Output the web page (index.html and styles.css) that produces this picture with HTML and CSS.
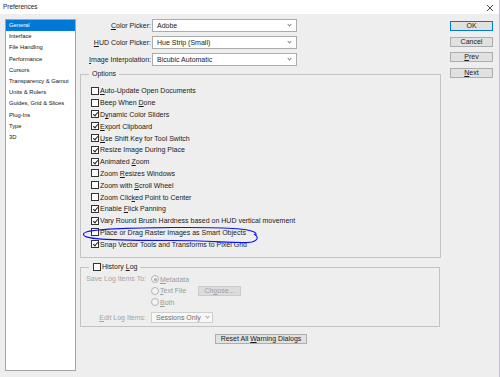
FILE: index.html
```html
<!DOCTYPE html>
<html lang="en">
<head>
    <meta charset="UTF-8">
    <meta name="viewport" content="width=device-width, initial-scale=1.0">
    <title>Preferences</title>
    <link rel="stylesheet" href="styles.css">
</head>
<body>
    <div class="window">
        <div class="titlebar">
            <span>Preferences</span>
            <svg class="close" width="8" height="8" viewBox="0 0 8 8"><path d="M1 1L7 7M7 1L1 7" stroke="#333" stroke-width="0.9"/></svg>
        </div>

        <div class="main">
            <ul class="nav">
                <li class="active">General</li>
                <li>Interface</li>
                <li>File Handling</li>
                <li>Performance</li>
                <li>Cursors</li>
                <li>Transparency &amp; Gamut</li>
                <li>Units &amp; Rulers</li>
                <li>Guides, Grid &amp; Slices</li>
                <li>Plug-Ins</li>
                <li>Type</li>
                <li>3D</li>
            </ul>

            <div class="panel">
                <div class="pickers">
                    <label><u>C</u>olor Picker:</label>
                    <div class="select"><span>Adobe</span><span class="chev"></span></div>
                    <label><u>H</u>UD Color Picker:</label>
                    <div class="select"><span>Hue Strip (Small)</span><span class="chev"></span></div>
                    <label><u>I</u>mage Interpolation:</label>
                    <div class="select"><span>Bicubic Automatic</span><span class="chev"></span></div>
                </div>

                <fieldset class="group options">
                    <legend>Options</legend>
                    <ul class="checks">
                        <li><span class="cb"></span><span><u>A</u>uto-Update Open Documents</span></li>
                        <li><span class="cb"></span><span>Beep When <u>D</u>one</span></li>
                        <li><span class="cb on"></span><span>D<u>y</u>namic Color Sliders</span></li>
                        <li><span class="cb on"></span><span><u>E</u>xport Clipboard</span></li>
                        <li><span class="cb on"></span><span><u>U</u>se Shift Key for Tool Switch</span></li>
                        <li><span class="cb on"></span><span>Resize Image During Place</span></li>
                        <li><span class="cb on"></span><span>Animated <u>Z</u>oom</span></li>
                        <li><span class="cb"></span><span>Zoom <u>R</u>esizes Windows</span></li>
                        <li><span class="cb"></span><span>Zoom with <u>S</u>croll Wheel</span></li>
                        <li><span class="cb"></span><span>Zoom Clic<u>k</u>ed Point to Center</span></li>
                        <li><span class="cb on"></span><span>Enable <u>F</u>lick Panning</span></li>
                        <li><span class="cb on"></span><span>Vary Round Brush Hardness based on HUD vertical movement</span></li>
                        <li><span class="cb"></span><span>Place or Drag Raster Images as Smart Objects</span></li>
                        <li><span class="cb on"></span><span>Snap Vector Tools and Transforms to Pixel Grid</span></li>
                    </ul>
                </fieldset>

                <fieldset class="group history">
                    <legend><span class="cb"></span><span>History <u>L</u>og</span></legend>
                    <div class="log-grid">
                        <label>Save Log Items To:</label>
                        <div class="radio-row"><span class="rd on"></span><span><u>M</u>etadata</span></div>
                        <span></span>
                        <div class="radio-row"><span class="rd"></span><span class="rd-text"><u>T</u>ext File</span><button class="btn disabled">Ch<u>o</u>ose...</button></div>
                        <span></span>
                        <div class="radio-row"><span class="rd"></span><span><u>B</u>oth</span></div>
                        <label class="edit-label"><u>E</u>dit Log Items:</label>
                        <div class="select small"><span>Sessions Only</span><span class="chev"></span></div>
                    </div>
                </fieldset>

                <div class="reset-row">
                    <button class="btn">Reset All <u>W</u>arning Dialogs</button>
                </div>
            </div>

            <div class="actions">
                <button class="btn default">OK</button>
                <button class="btn">Cancel</button>
                <button class="btn"><u>P</u>rev</button>
                <button class="btn"><u>N</u>ext</button>
            </div>
        </div>

        <svg class="annot" width="180" height="22" viewBox="0 0 180 22">
            <path d="M174 11 C176 5 150 3 90 3.5 C40 4 2 5 1.5 10 C1 15 20 16.5 90 16.5 C130 16.5 160 20 170 18 C176 16 177 13 172 10" fill="none" stroke="#1010ff" stroke-width="1.1"/>
        </svg>
    </div>
</body>
</html>
```

FILE: styles.css
```css
* {
    box-sizing: border-box;
}
html, body {
    margin: 0;
    padding: 0;
}
body {
    font-family: "Liberation Sans", Arial, sans-serif;
    font-size: 7px;
    color: #1a1a1a;
    background: #eeeeee;
}
.window {
    position: relative;
    width: 500px;
    height: 377px;
    overflow: hidden;
    background: #eeeeee;
    border-right: 1px solid #c6bdea;
}
.titlebar {
    height: 14px;
    background: #ffffff;
    display: flex;
    justify-content: space-between;
    align-items: center;
    padding: 0 5px 2px 3px;
    font-size: 6.4px;
}
.close {
    margin-top: 4px;
}
.main {
    display: flex;
    padding: 5px 0 0 5px;
}
.nav {
    list-style: none;
    margin: 0;
    padding: 0;
    width: 71px;
    height: 352px;
    background: #ffffff;
    border: 1px solid #a4a4a4;
    font-size: 5.8px;
    color: #111;
}
.nav li {
    height: 11.2px;
    line-height: 11.2px;
    padding-left: 3px;
    white-space: nowrap;
}
.nav li.active {
    background: #0078d7;
    color: #ffffff;
}
.panel {
    width: 361px;
    margin-left: 4px;
}
.pickers {
    display: grid;
    grid-template-columns: 71px 145px;
    column-gap: 1px;
    row-gap: 4px;
}
.pickers label {
    text-align: right;
    line-height: 13px;
    white-space: nowrap;
}
.select {
    height: 13px;
    background: #ffffff;
    border: 1px solid #acacac;
    display: flex;
    align-items: center;
    justify-content: space-between;
    padding: 0 5px 0 4px;
}
.chev {
    width: 3px;
    height: 3px;
    border: solid #888;
    border-width: 0 1px 1px 0;
    transform: rotate(45deg);
    margin-top: -2px;
}
.group {
    margin: 3px 0 0;
    border: 1px solid #c3c3c3;
    padding: 6px 8px 7px 8px;
    min-width: 0;
}
.group legend {
    padding: 0 3px;
    line-height: 10px;
}
.checks {
    list-style: none;
    margin: 0 0 0 2px;
    padding: 0;
}
.checks li {
    height: 11.8px;
    display: flex;
    align-items: center;
    gap: 1px;
    white-space: nowrap;
}
.cb {
    position: relative;
    display: inline-block;
    width: 8px;
    height: 8px;
    flex: none;
    border: 1px solid #333;
    background: #ffffff;
}
.cb.on::after {
    content: "";
    position: absolute;
    left: 2px;
    top: 0px;
    width: 2px;
    height: 4px;
    border: solid #222;
    border-width: 0 1px 1px 0;
    transform: rotate(40deg);
}
.history {
    margin: 4px 1px 0 0;
    padding: 1px 8px 3px 8px;
}
.history legend {
    display: flex;
    align-items: center;
    gap: 1px;
    padding: 0 3px 0 4px;
}
.log-grid {
    display: grid;
    grid-template-columns: 61px 1fr;
    column-gap: 5px;
    margin-left: -4px;
    color: #a4a4a4;
}
.log-grid label {
    text-align: right;
    white-space: nowrap;
    line-height: 11.7px;
}
.log-grid .edit-label {
    margin-top: 3.5px;
    line-height: 11px;
}
.radio-row {
    height: 11.7px;
    display: flex;
    align-items: center;
    gap: 1px;
    color: #9a9a9a;
    white-space: nowrap;
}
.rd {
    display: inline-block;
    width: 8px;
    height: 8px;
    border-radius: 50%;
    border: 1px solid #b4b4b4;
    background: #f4f4f4;
    position: relative;
}
.rd.on::after {
    content: "";
    position: absolute;
    left: 1.5px;
    top: 1.5px;
    width: 3px;
    height: 3px;
    border-radius: 50%;
    background: #a8a8a8;
}
.rd-text {
    width: 37px;
}
.select.small {
    width: 62px;
    height: 11px;
    margin-top: 3.5px;
    background: #f7f7f7;
    border-color: #cfcfcf;
    color: #6e6e6e;
    padding: 0 3px 0 4px;
}
.select.small .chev {
    border-color: #aaa;
}
.btn {
    font-family: "Liberation Sans", Arial, sans-serif;
    font-size: 7px;
    color: #1a1a1a;
    height: 10px;
    padding: 0;
    line-height: 8px;
    background: #e1e1e1;
    border: 1px solid #adadad;
    border-radius: 0;
}
.btn.disabled {
    width: 43px;
    background: #dcdcdc;
    border-color: #cacaca;
    color: #9e9e9e;
}
.btn.default {
    border-color: #0078d7;
}
.reset-row {
    display: flex;
    justify-content: center;
    margin-top: 7px;
}
.reset-row .btn {
    width: 92px;
    margin-left: 1px;
}
.actions {
    display: flex;
    flex-direction: column;
    gap: 5.5px;
    width: 43px;
    margin: 2px 0 0 9px;
}
.annot {
    position: absolute;
    left: 82px;
    top: 224px;
}
```
